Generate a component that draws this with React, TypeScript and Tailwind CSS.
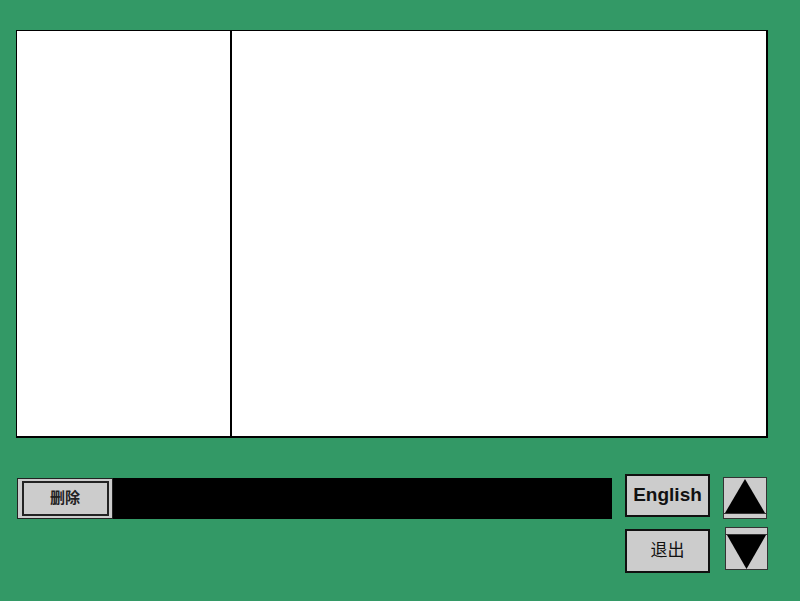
export default function App() {
  return (
    <div className="w-[800px] h-[601px] bg-[#339966] pt-[30px] pl-[16px] overflow-hidden" style={{ fontFamily: '"Liberation Sans", "Noto Sans CJK SC", sans-serif' }}>
      {/* main panels */}
      <div className="flex w-[752px] h-[408px] bg-white border-t border-l border-b-2 border-r-2 border-black">
        <div className="w-[215px] h-full border-r-2 border-black" />
        <div className="flex-1 h-full" />
      </div>

      <div className="flex mt-[36px]">
        {/* delete + black bar */}
        <div className="flex mt-[4px] ml-[1px] h-[41px] w-[595px]">
          <div className="w-[96px] h-full bg-[#cccccc] border border-[#222] flex items-center justify-center">
            <div className="w-[87px] h-[35px] border-2 border-[#222] flex items-center justify-center text-[15px] font-bold text-[#222]">
              删除
            </div>
          </div>
          <div className="flex-1 h-full bg-black" />
        </div>

        {/* language / exit */}
        <div className="ml-[13px] flex flex-col">
          <div className="w-[85px] h-[43px] bg-[#cccccc] border-2 border-[#111] flex items-center justify-center text-[19px] font-bold text-[#111]">
            English
          </div>
          <div className="mt-[12px] w-[85px] h-[44px] bg-[#cccccc] border-2 border-[#111] flex items-center justify-center text-[17px] text-[#111]">
            退出
          </div>
        </div>

        {/* arrows */}
        <div className="ml-[13px] flex flex-col">
          <div className="mt-[3px] w-[44px] h-[42px] bg-[#cccccc] border border-[#333]">
            <svg width="42" height="40" viewBox="0 0 42 40" className="block">
              <polygon points="21,1 1,35 41,35" fill="#000" />
              <line x1="0" y1="35.5" x2="42" y2="35.5" stroke="#333" strokeWidth="1" />
            </svg>
          </div>
          <div className="mt-[8px] ml-[2px] w-[43px] h-[43px] bg-[#cccccc] border border-[#333]">
            <svg width="41" height="41" viewBox="0 0 41 41" className="block">
              <line x1="0" y1="6.5" x2="41" y2="6.5" stroke="#333" strokeWidth="1" />
              <polygon points="1,7 40,7 20.5,41" fill="#000" />
            </svg>
          </div>
        </div>
      </div>
    </div>
  );
}
